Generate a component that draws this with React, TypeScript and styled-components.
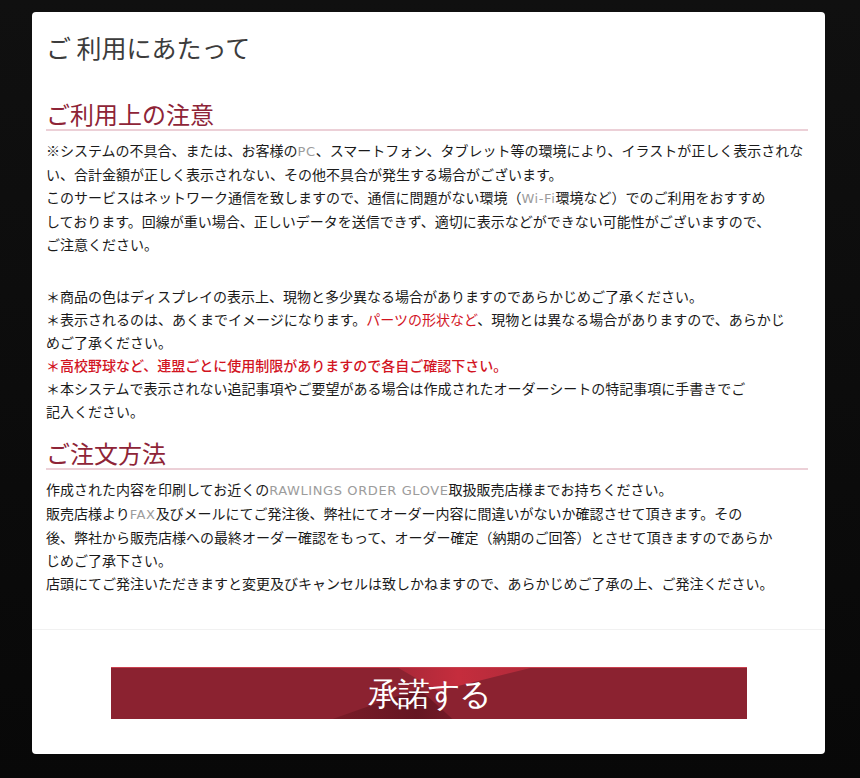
import styled, { createGlobalStyle } from 'styled-components';

const GlobalStyle = createGlobalStyle`
  html,
  body {
    margin: 0;
    padding: 0;
    background: #0b0b0b;
  }

  body {
    font-family: 'Noto Sans CJK JP', 'Noto Sans', sans-serif;
    color: #1a1a1a;
  }
`;

export default function App() {
  return (
    <Page>
      <GlobalStyle />
      <Modal>
        <Title>ご 利用にあたって</Title>

        <Body>
          <Section>
            <Heading>ご利用上の注意</Heading>
            <Text>
              ※システムの不具合、または、お客様の<Latin>PC</Latin>
              、スマートフォン、タブレット等の環境により、イラストが正しく表示されな
              <br />
              い、合計金額が正しく表示されない、その他不具合が発生する場合がございます。
              <br />
              このサービスはネットワーク通信を致しますので、通信に問題がない環境（
              <Latin>Wi-Fi</Latin>環境など）でのご利用をおすすめ
              <br />
              しております。回線が重い場合、正しいデータを送信できず、適切に表示などができない可能性がございますので、
              <br />
              ご注意ください。
            </Text>
            <Text spaced>
              ＊商品の色はディスプレイの表示上、現物と多少異なる場合がありますのであらかじめご了承ください。
              <br />
              ＊表示されるのは、あくまでイメージになります。
              <Alert>パーツの形状など</Alert>、現物とは異なる場合がありますので、あらかじ
              <br />
              めご了承ください。
              <br />
              <Alert strong>
                ＊高校野球など、連盟ごとに使用制限がありますので各自ご確認下さい。
              </Alert>
              <br />
              ＊本システムで表示されない追記事項やご要望がある場合は作成されたオーダーシートの特記事項に手書きでご
              <br />
              記入ください。
            </Text>
          </Section>

          <Section>
            <Heading>ご注文方法</Heading>
            <Text>
              作成された内容を印刷してお近くの<Latin>RAWLINGS ORDER GLOVE</Latin>
              取扱販売店様までお持ちください。
              <br />
              販売店様より<Latin>FAX</Latin>
              及びメールにてご発注後、弊社にてオーダー内容に間違いがないか確認させて頂きます。その
              <br />
              後、弊社から販売店様への最終オーダー確認をもって、オーダー確定（納期のご回答）とさせて頂きますのであらか
              <br />
              じめご了承下さい。
              <br />
              店頭にてご発注いただきますと変更及びキャンセルは致しかねますので、あらかじめご了承の上、ご発注ください。
            </Text>
          </Section>
        </Body>

        <Footer>
          <AcceptButton type="button">
            <ButtonLabel>承諾する</ButtonLabel>
          </AcceptButton>
        </Footer>
      </Modal>
    </Page>
  );
}

const Page = styled.div`
  min-height: 778px;
  padding: 12px 35px 25px 32px;
  box-sizing: border-box;
  background: linear-gradient(180deg, #101010 0%, #080808 100%);
`;

const Modal = styled.div`
  width: 793px;
  background: #fff;
  border-radius: 4px;
  overflow: hidden;
`;

const Title = styled.h1`
  margin: 0;
  padding: 20px 14px 0;
  font-size: 25px;
  line-height: 30px;
  font-weight: 400;
  color: #3c3c3c;
`;

const Body = styled.div`
  padding: 37px 17px 34px 14px;
  display: flex;
  flex-direction: column;
  gap: 15px;
`;

const Section = styled.section`
  display: flex;
  flex-direction: column;
`;

const Heading = styled.h2`
  margin: 0 0 8px;
  font-size: 24px;
  line-height: 30px;
  font-weight: 400;
  color: #8e2437;
  border-bottom: 2px solid #ecd0d7;
`;

const Text = styled.p<{ spaced?: boolean }>`
  margin: ${(props) => (props.spaced ? '29px' : '0')} 0 0;
  font-size: 14px;
  line-height: 23px;
  white-space: nowrap;
`;

const Latin = styled.span`
  font-family: 'DejaVu Sans', 'Liberation Sans', sans-serif;
  font-size: 13px;
  letter-spacing: 0.6px;
  color: #9c9c9c;
`;

const Alert = styled.span<{ strong?: boolean }>`
  color: #d2141f;
  font-weight: ${(props) => (props.strong ? 500 : 400)};
`;

const Footer = styled.div`
  border-top: 1px solid #f1f1f1;
  padding: 37px 0 35px;
  display: flex;
  justify-content: center;
`;

const AcceptButton = styled.button`
  position: relative;
  width: 636px;
  height: 52px;
  padding: 0;
  border: none;
  border-top: 1px solid #c9404e;
  background: #8b2230;
  overflow: hidden;
  cursor: pointer;
  display: flex;
  align-items: center;
  justify-content: center;

  /* lighter facet hanging from the top edge */
  &::before {
    content: '';
    position: absolute;
    top: 0;
    left: 288px;
    width: 132px;
    height: 100%;
    background: linear-gradient(90deg, #a82838 0%, #c52d3d 45%, #b02a3a 100%);
    clip-path: polygon(0 0, 100% 0, 30% 45%);
  }

  /* darker facet rising from the bottom edge */
  &::after {
    content: '';
    position: absolute;
    bottom: 0;
    left: 222px;
    width: 120px;
    height: 100%;
    background: linear-gradient(90deg, #7a1c28 0%, #651622 70%, #741a27 100%);
    clip-path: polygon(72% 40%, 100% 100%, 0 100%);
  }
`;

const ButtonLabel = styled.span`
  position: relative;
  z-index: 1;
  font-size: 32px;
  line-height: 1;
  font-weight: 500;
  color: #fff;
  letter-spacing: -2px;
`;
